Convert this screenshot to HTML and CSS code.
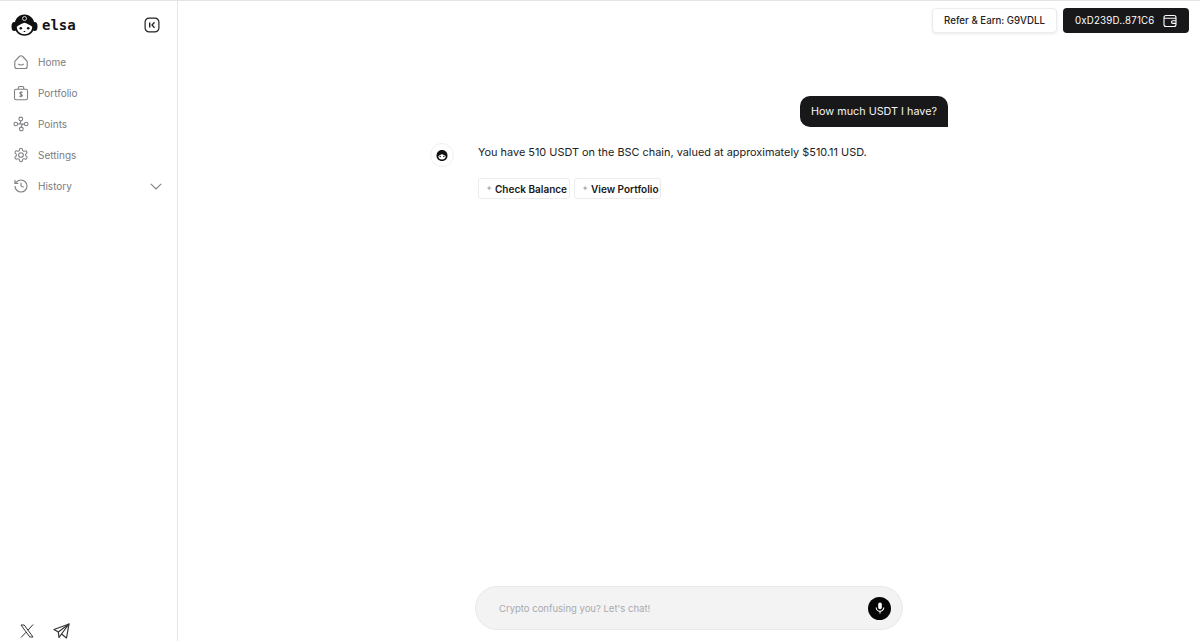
FILE: index.html
```html
<!DOCTYPE html>
<html lang="en">
<head>
    <meta charset="UTF-8">
    <meta name="viewport" content="width=device-width, initial-scale=1.0">
    <title>Elsa</title>
    <link rel="stylesheet" href="styles.css">
</head>
<body>

    <aside class="sidebar">
        <div class="brand">
            <svg class="logo" width="27" height="22" viewBox="0 0 27 22">
                <ellipse cx="3.300" cy="12.500" rx="2.800" ry="4.500" fill="#111"/>
                <ellipse cx="23.700" cy="12.500" rx="2.800" ry="4.500" fill="#111"/>
                <path d="M3.500 11.500C3.500 4.500 8 .5 13.500 .5S23.500 4.500 23.500 11.500C23.500 18 19 21.700 13.500 21.700S3.500 18 3.500 11.500Z" fill="#111"/>
                <circle cx="13.500" cy="4.500" r="2" fill="none" stroke="#fff" stroke-width=".8"/>
                <path d="M5.800 12.800C8 11 10.500 9.800 13.500 8.800C16.500 9.800 19 11 21.200 12.800C21 17.500 17.800 20.300 13.500 20.300S6 17.500 5.800 12.800Z" fill="#fff"/>
                <circle cx="9.800" cy="14.300" r="1.300" fill="#111"/>
                <circle cx="17.200" cy="14.300" r="1.300" fill="#111"/>
                <path d="M12.700 17.500h1.600" stroke="#111" stroke-width="1"/>
            </svg>
            <span class="brand-name">elsa</span>
            <svg class="collapse" width="16" height="16" viewBox="0 0 16 16" fill="none" stroke="#222" stroke-width="1.200">
                <rect x="1.100" y="1.100" width="13.800" height="13.800" rx="4"/>
                <path d="M5.700 5.500v5" stroke-width="1.400"/>
                <path d="M10.500 5.300L8 8l2.500 2.700" stroke-width="1.300"/>
            </svg>
        </div>

        <nav class="nav">
            <a class="nav-item">
                <svg width="16" height="16" viewBox="0 0 16 16"><path d="M1.800 7.300L6.300 2.500Q8 1 9.700 2.500L14.200 7.300v5.200a2 2 0 0 1-2 2H3.800a2 2 0 0 1-2-2Z"/><path d="M5.300 10c1.400 1.200 4 1.200 5.400 0"/></svg>
                Home
            </a>
            <a class="nav-item">
                <svg width="16" height="16" viewBox="0 0 16 16"><rect x="1.500" y="4.300" width="13" height="10.400" rx="1.500"/><path d="M5.300 4.300V2.800a1.300 1.300 0 0 1 1.300-1.300h2.800a1.300 1.300 0 0 1 1.300 1.300v1.500"/><path d="M9.500 7.500C9 7 7 6.700 6.800 8c-.2 1.500 2.600 1 2.500 2.500-.1 1.200-2 1.100-2.800.5M8 6.300v6"/></svg>
                Portfolio
            </a>
            <a class="nav-item">
                <svg width="16" height="16" viewBox="0 0 16 16"><circle cx="7.800" cy="3" r="1.900"/><circle cx="2.800" cy="8" r="1.800"/><circle cx="13.200" cy="8" r="1.800"/><circle cx="8.300" cy="13" r="1.900"/><path d="M4.600 8h6.800M4.600 8c2 0 3.200-1.500 3.200-3.100M11.400 8c-2 0-3.100 1.500-3.100 3.100"/></svg>
                Points
            </a>
            <a class="nav-item">
                <svg width="16" height="16" viewBox="0 0 24 24"><g stroke-width="1.600"><path d="M12.220 2h-.44a2 2 0 0 0-2 2v.18a2 2 0 0 1-1 1.730l-.43.25a2 2 0 0 1-2 0l-.15-.08a2 2 0 0 0-2.730.73l-.22.38a2 2 0 0 0 .73 2.730l.15.1a2 2 0 0 1 1 1.720v.51a2 2 0 0 1-1 1.740l-.15.09a2 2 0 0 0-.73 2.730l.22.38a2 2 0 0 0 2.730.73l.15-.08a2 2 0 0 1 2 0l.43.25a2 2 0 0 1 1 1.730V20a2 2 0 0 0 2 2h.44a2 2 0 0 0 2-2v-.18a2 2 0 0 1 1-1.730l.43-.25a2 2 0 0 1 2 0l.15.08a2 2 0 0 0 2.730-.73l.22-.39a2 2 0 0 0-.73-2.730l-.15-.08a2 2 0 0 1-1-1.740v-.5a2 2 0 0 1 1-1.740l.15-.09a2 2 0 0 0 .73-2.730l-.22-.38a2 2 0 0 0-2.730-.73l-.15.08a2 2 0 0 1-2 0l-.43-.25a2 2 0 0 1-1-1.730V4a2 2 0 0 0-2-2z"/><circle cx="12" cy="12" r="3.500"/></g></svg>
                Settings
            </a>
            <a class="nav-item">
                <svg width="16" height="16" viewBox="0 0 24 24"><g stroke-width="1.700"><path d="M3 12a9 9 0 1 0 9-9 9.750 9.750 0 0 0-6.740 2.740L3 8"/><path d="M3 3v5h5"/><path d="M12 7v5l4 2"/></g></svg>
                History
                <svg class="chevron" width="12" height="7" viewBox="0 0 12 7"><path d="M.8.800L6 6l5.200-5.200"/></svg>
            </a>
        </nav>

        <div class="socials">
            <svg width="14" height="14" viewBox="0 0 14 14" fill="none" stroke="#333" stroke-width="1"><path d="M1 1h3.200l8.800 12H9.800Z"/><path d="M13 .5L8 6.200M6 8.300L1 13.500"/></svg>
            <svg width="17" height="16" viewBox="0 0 17 16" fill="none" stroke="#333" stroke-width="1.200" stroke-linejoin="round"><path d="M1 6.500L16 1l-2.500 14-5-4-2.500 3.500-.7-5.500Z"/><path d="M5.300 9L16 1 8.500 11"/></svg>
        </div>
    </aside>

    <main class="main">
        <header class="topbar">
            <button class="btn-refer">Refer &amp; Earn: G9VDLL</button>
            <button class="btn-wallet">
                0xD239D..871C6
                <svg width="14" height="14" viewBox="0 0 14 14" fill="none" stroke="#fff" stroke-width="1.100"><rect x="1" y="1.500" width="12" height="11" rx="2"/><path d="M1 4.300h12M13 6.800H9.800a1.300 1.300 0 0 0 0 2.600H13"/></svg>
            </button>
        </header>

        <section class="chat">
            <div class="bubble">How much USDT I have?</div>
            <div class="answer">
                <div class="avatar">
                    <svg width="12" height="11" viewBox="0 0 12 11"><path d="M6 0C2.500 0 .5 2.500.5 5.500S2.500 11 6 11s5.500-2.500 5.500-5.500S9.500 0 6 0Z" fill="#111"/><path d="M2.300 6.200C3.500 5 4.800 4.500 6 4.200c1.200.3 2.500.8 3.700 2C9.500 8.500 8 9.500 6 9.500S2.500 8.500 2.300 6.200Z" fill="#fff"/><circle cx="4.200" cy="6.500" r=".7" fill="#111"/><circle cx="7.800" cy="6.500" r=".7" fill="#111"/></svg>
                </div>
                <div class="answer-body">
                    <p class="answer-text">You have 510 USDT on the BSC chain, valued at approximately $510.11 USD.</p>
                    <div class="chips">
                        <button class="chip"><span class="plus">✦</span>Check Balance</button>
                        <button class="chip"><span class="plus">✦</span>View Portfolio</button>
                    </div>
                </div>
            </div>
        </section>

        <div class="composer">
            <span class="placeholder">Crypto confusing you? Let's chat!</span>
            <button class="mic">
                <svg width="10" height="12" viewBox="0 0 10 12" fill="none" stroke="#fff" stroke-width="1.100"><rect x="3.200" y=".5" width="3.600" height="6.800" rx="1.800" fill="#fff" stroke="none"/><path d="M1.200 5.500a3.800 3.800 0 0 0 7.600 0M5 9.300v2.200"/></svg>
            </button>
        </div>
    </main>

</body>
</html>
```

FILE: styles.css
```css
/* page frame */
html, body {
    height: 100%;
}
body {
    margin: 0;
    display: flex;
    height: 641px;
    overflow: hidden;
    font-family: 'Inter', sans-serif;
    background-color: #ffffff;
    color: #1a1a1c;
    border-top: 1px solid #e4e4e6;
    box-sizing: border-box;
}
button {
    font-family: inherit;
    cursor: pointer;
}

/* sidebar */
.sidebar {
    width: 178px;
    flex-shrink: 0;
    box-sizing: border-box;
    border-right: 1px solid #e5e5e7;
    display: flex;
    flex-direction: column;
    padding: 13px 15px 0 11px;
}
.brand {
    display: flex;
    align-items: center;
    height: 22px;
}
.brand-name {
    font-family: 'DejaVu Sans Mono', monospace;
    font-weight: 700;
    font-size: 14px;
    margin-left: 4px;
    color: #161618;
}
.collapse {
    margin-left: auto;
    margin-right: 2px;
}
.nav {
    display: flex;
    flex-direction: column;
    gap: 15px;
    margin-top: 18px;
}
.nav-item {
    display: flex;
    align-items: center;
    height: 16px;
    padding-left: 2px;
    gap: 9px;
    font-size: 10px;
    color: #7b7b80;
}
.nav-item svg {
    fill: none;
    stroke: #808085;
    stroke-width: 1.100;
}
.nav-item .chevron {
    margin-left: auto;
}
.socials {
    margin-top: auto;
    display: flex;
    align-items: center;
    gap: 19px;
    padding-left: 9px;
    height: 20px;
}

/* main column */
.main {
    flex: 1;
    display: flex;
    flex-direction: column;
    min-width: 0;
}
.topbar {
    display: flex;
    justify-content: flex-end;
    gap: 6px;
    padding: 7px 11px 0 0;
}
.btn-refer {
    height: 25px;
    width: 125px;
    padding: 0;
    border: 1px solid #ececee;
    border-radius: 4px;
    background: #ffffff;
    box-shadow: 0 1px 3px rgba(0, 0, 0, 0.08);
    font-size: 9.700px;
    font-weight: 500;
    color: #222224;
}
.btn-wallet {
    height: 25px;
    width: 126px;
    padding: 0 0 0 12px;
    border: none;
    border-radius: 4px;
    background: #18181a;
    color: #ffffff;
    font-size: 9.700px;
    font-weight: 400;
    letter-spacing: 0.2px;
    display: flex;
    align-items: center;
    gap: 8px;
}

/* chat */
.chat {
    width: 470px;
    margin: 63px 0 0 300px;
    flex: 1;
    display: flex;
    flex-direction: column;
}
.bubble {
    align-self: flex-end;
    background: #18181a;
    color: #f4f4f5;
    font-size: 10.800px;
    height: 31px;
    line-height: 31px;
    padding: 0 11px;
    border-radius: 10px 10px 0 10px;
}
.answer {
    display: flex;
    margin: 16px 0 0 -48px;
    width: 518px;
}
.avatar {
    width: 24px;
    height: 24px;
    border-radius: 50%;
    border: 1px solid #efeff1;
    box-sizing: border-box;
    display: flex;
    align-items: center;
    justify-content: center;
    flex-shrink: 0;
}
.answer-body {
    margin-left: 24px;
}
.answer-text {
    margin: 0;
    padding-top: 1px;
    font-size: 10.900px;
    line-height: 16px;
    color: #222224;
}
.chips {
    display: flex;
    gap: 4px;
    margin-top: 18px;
}
.chip {
    height: 21px;
    padding: 0 2px 0 4px;
    border: 1px solid #ececee;
    border-radius: 3px;
    background: #ffffff;
    font-size: 10px;
    font-weight: 600;
    color: #19191b;
    display: flex;
    align-items: center;
}
.plus {
    color: #b0b0b4;
    font-family: 'DejaVu Sans', sans-serif;
    font-size: 8px;
    width: 12px;
    text-align: center;
}

/* input */
.composer {
    width: 428px;
    height: 44px;
    box-sizing: border-box;
    margin: 0 0 11px 297px;
    padding: 0 11px 0 23px;
    background: #f3f3f4;
    border: 1px solid #e8e8ea;
    border-radius: 22px;
    display: flex;
    align-items: center;
    justify-content: space-between;
}
.placeholder {
    font-size: 9.500px;
    color: #a9a9ae;
}
.mic {
    width: 23px;
    height: 23px;
    padding: 0;
    border: none;
    border-radius: 50%;
    background: #050505;
    display: flex;
    align-items: center;
    justify-content: center;
}
```
